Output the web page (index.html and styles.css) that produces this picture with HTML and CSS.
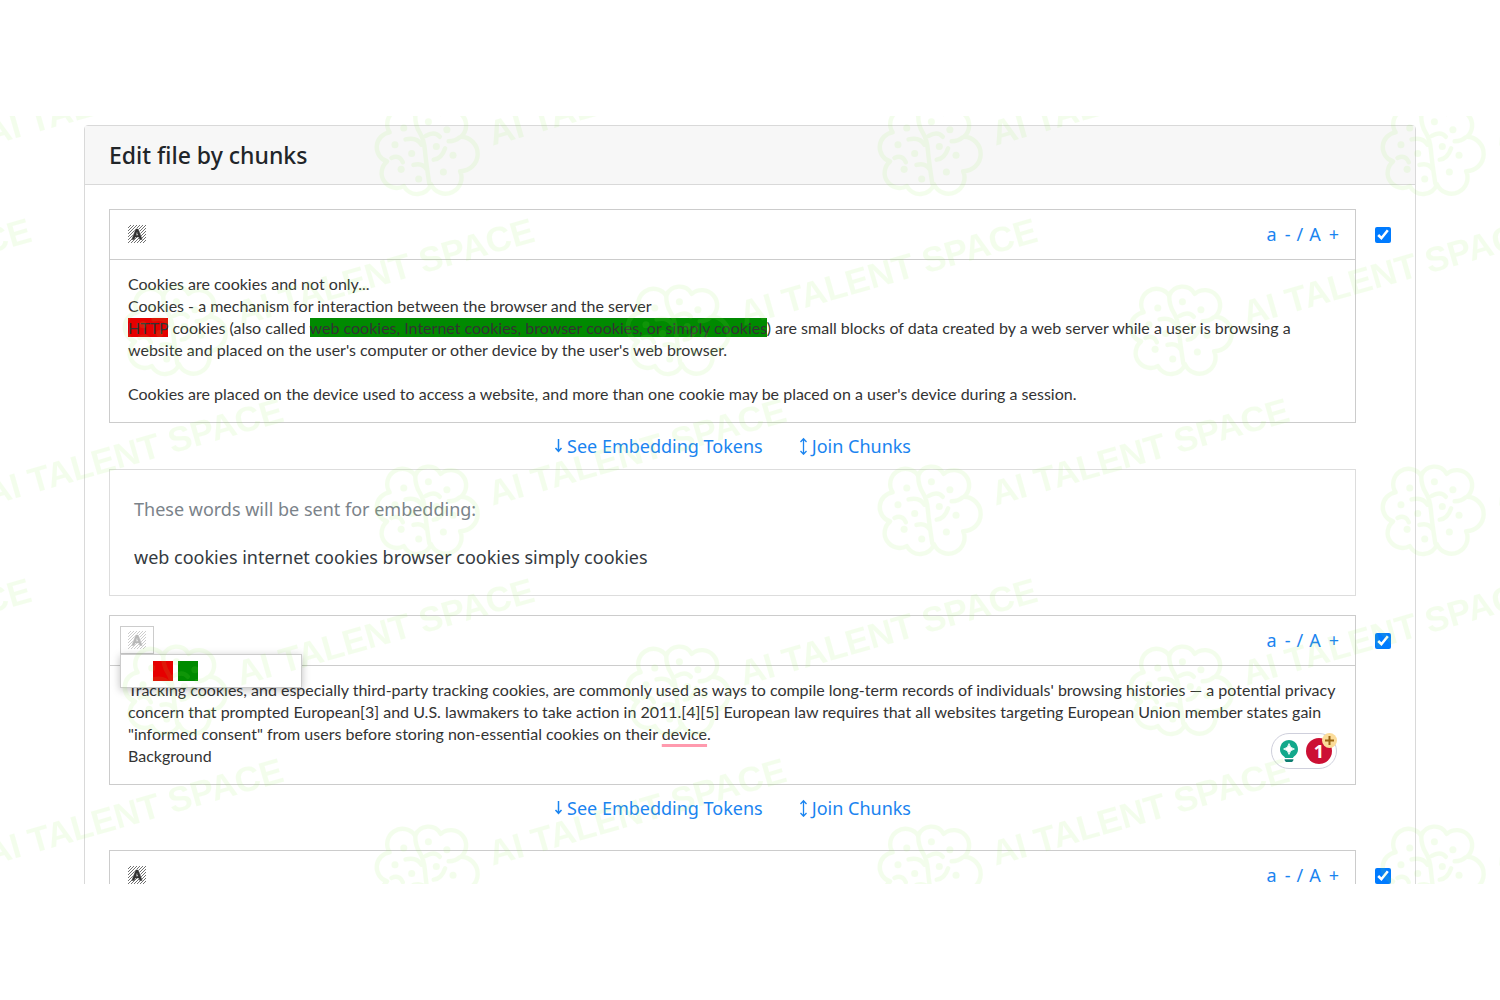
FILE: index.html
```html
<!DOCTYPE html>
<html lang="en">
<head>
    <meta charset="UTF-8">
    <meta name="viewport" content="width=device-width, initial-scale=1.0">
    <title>Edit file by chunks</title>
    <link rel="stylesheet" href="styles.css">
</head>
<body>
    <!-- Shared icons -->
    <svg class="sprite" aria-hidden="true">
        <defs>
            <pattern id="hatch" width="3" height="3" patternUnits="userSpaceOnUse">
                <path d="M-1 1L1 -1M-1 4L4 -1M2 4L4 2" stroke="#333" stroke-width="0.7"/>
            </pattern>
        </defs>
        <symbol id="icon-background" viewBox="0 0 18 18">
            <rect width="18" height="18" fill="url(#hatch)"/>
            <path d="M5 14L8.3 4.5H9.7L13 14M6.3 10.8H11.7" fill="none" stroke="#fff" stroke-width="2.6"/>
            <path d="M3.8 14.4L7.8 4H10.2L14.2 14.4H11.7L10.9 12H7.1L6.3 14.4ZM7.8 10.2H10.2L9 6.8Z" fill="#333" fill-rule="evenodd" stroke="#333" stroke-width="0.4"/>
        </symbol>
        <symbol id="icon-down" viewBox="0 0 9 18">
            <path d="M4.5 2V14M1.5 11L4.5 14.3L7.5 11" fill="none" stroke="currentColor" stroke-width="1.5"/>
        </symbol>
        <symbol id="icon-updown" viewBox="0 0 9 18">
            <path d="M4.5 2V17M1.5 5L4.5 1.8L7.5 5M1.5 14L4.5 17.2L7.5 14" fill="none" stroke="currentColor" stroke-width="1.3"/>
        </symbol>
    </svg>

    <main class="screen">
        <section class="card">
            <header class="card-header">
                <h1>Edit file by chunks</h1>
            </header>
            <div class="card-body">

                <div class="row">
                    <div class="chunk">
                        <div class="toolbar">
                            <button class="picker" type="button" aria-label="Background color">
                                <svg><use href="#icon-background"/></svg>
                            </button>
                            <div class="case">
                                <button type="button"><span>a</span> <span>-</span></button>
                                <span>/</span>
                                <button type="button"><span>A</span> <span>+</span></button>
                            </div>
                        </div>
                        <div class="editor" contenteditable="true" spellcheck="false">
                            <p>Cookies are cookies and not only...</p>
                            <p>Cookies - a mechanism for interaction between the browser and the server</p>
                            <p><span class="bg-red">HTTP</span> cookies (also called <span class="bg-green">web cookies, Internet cookies, browser cookies, or simply cookies</span>) are small blocks of data created by a web server while a user is browsing a website and placed on the user's computer or other device by the user's web browser.</p>
                            <p><br></p>
                            <p>Cookies are placed on the device used to access a website, and more than one cookie may be placed on a user's device during a session.</p>
                        </div>
                    </div>
                    <input type="checkbox" checked aria-label="Use chunk 1">
                    <div class="actions">
                        <a href="#tokens-1"><svg><use href="#icon-down"/></svg>See Embedding Tokens</a>
                        <a href="#join-1"><svg><use href="#icon-updown"/></svg>Join Chunks</a>
                    </div>
                    <div class="tokens" id="tokens-1">
                        <p class="muted">These words will be sent for embedding:</p>
                        <p>web cookies internet cookies browser cookies simply cookies</p>
                    </div>
                </div>

                <div class="row">
                    <div class="chunk">
                        <div class="toolbar">
                            <button class="picker open" type="button" aria-label="Background color" aria-expanded="true">
                                <svg><use href="#icon-background"/></svg>
                            </button>
                            <div class="palette">
                                <button class="swatch bg-red" type="button" aria-label="Red"></button>
                                <button class="swatch bg-green" type="button" aria-label="Green"></button>
                            </div>
                            <div class="case">
                                <button type="button"><span>a</span> <span>-</span></button>
                                <span>/</span>
                                <button type="button"><span>A</span> <span>+</span></button>
                            </div>
                        </div>
                        <div class="editor" contenteditable="true" spellcheck="false">
                            <p>Tracking cookies, and especially third-party tracking cookies, are commonly used as ways to compile long-term records of individuals' browsing histories — a potential privacy concern that prompted European[3] and U.S. lawmakers to take action in 2011.[4][5] European law requires that all websites targeting European Union member states gain "informed consent" from users before storing non-essential cookies on their <span class="typo">device</span>.</p>
                            <p>Background</p>
                        </div>
                        <div class="checker">
                            <svg class="bulb" viewBox="0 0 18 22">
                                <path d="M9 0A9 9 0 0 1 14 16.4Q13 17 13 18H5Q5 17 4 16.4A9 9 0 0 1 9 0Z" fill="#12a88b"/>
                                <path d="M9 3.6Q9.8 8.2 14.4 9Q9.8 9.8 9 14.4Q8.2 9.8 3.6 9Q8.2 8.2 9 3.6Z" fill="#fff" stroke="#fff" stroke-width="0.8"/>
                                <path d="M4.5 19.2H13.5Q13.3 22 11 22H7Q4.7 22 4.5 19.2Z" fill="#0d7d70"/>
                            </svg>
                            <span class="count">1</span>
                            <svg class="plus" viewBox="0 0 15 15">
                                <circle cx="7.5" cy="7.5" r="7.5" fill="#fbdc9a"/>
                                <path d="M7.5 3V12M3 7.5H12" stroke="#9a6412" stroke-width="2"/>
                            </svg>
                        </div>
                    </div>
                    <input type="checkbox" checked aria-label="Use chunk 2">
                    <div class="actions">
                        <a href="#tokens-2"><svg><use href="#icon-down"/></svg>See Embedding Tokens</a>
                        <a href="#join-2"><svg><use href="#icon-updown"/></svg>Join Chunks</a>
                    </div>
                </div>

                <div class="row">
                    <div class="chunk">
                        <div class="toolbar">
                            <button class="picker" type="button" aria-label="Background color">
                                <svg><use href="#icon-background"/></svg>
                            </button>
                            <div class="case">
                                <button type="button"><span>a</span> <span>-</span></button>
                                <span>/</span>
                                <button type="button"><span>A</span> <span>+</span></button>
                            </div>
                        </div>
                        <div class="editor" contenteditable="true" spellcheck="false">
                            <p><br></p>
                        </div>
                    </div>
                    <input type="checkbox" checked aria-label="Use chunk 3">
                </div>

            </div>
        </section>

        <!-- Brand watermark, tiled over the whole screen -->
        <svg class="watermark" aria-hidden="true">
            <defs>
                <g id="mark">
                    <g transform="translate(-3 0) scale(0.88)">
                        <g fill="none" stroke="currentColor" stroke-width="5" stroke-linecap="round" stroke-linejoin="round">
                            <path d="M-39 -20A17 17 0 0 1 -10 -39A16 16 0 0 1 19 -41A17 17 0 0 1 42 -15A17 17 0 0 1 41 24A18 18 0 0 1 8 39A17 17 0 0 1 -23 41A17 17 0 0 1 -42 13A17 17 0 0 1 -39 -20Z"/>
                            <path d="M-10 -39Q-10 -28 -5 -20T1 0T6 38M-21 -12Q-8 -15 -3 -6M-37 9Q-28 5 -24 14M-12 17Q-2 14 3 22M2 -16Q12 -22 18 -15M11 11Q20 10 24 -2M28 -10Q36 -10 40 -14"/>
                        </g>
                        <g fill="currentColor">
                            <circle cx="-23" cy="-25" r="4"/>
                            <circle cx="5" cy="-32" r="4"/>
                            <circle cx="26" cy="-23" r="4"/>
                            <circle cx="-33" cy="-6" r="4"/>
                            <circle cx="-14" cy="4" r="4"/>
                            <circle cx="14" cy="-4" r="4"/>
                            <circle cx="33" cy="6" r="4"/>
                            <circle cx="-26" cy="22" r="4"/>
                            <circle cx="-6" cy="33" r="4"/>
                            <circle cx="22" cy="25" r="4"/>
                        </g>
                    </g>
                    <text x="64" y="14" transform="rotate(-16)">AI TALENT SPACE</text>
                </g>
                <pattern id="marks" x="367" y="-91" width="503" height="360" patternUnits="userSpaceOnUse">
                    <use href="#mark" x="60" y="125"/>
                    <use href="#mark" x="311" y="305"/>
                    <use href="#mark" x="-192" y="305"/>
                </pattern>
            </defs>
            <rect width="100%" height="100%" fill="url(#marks)"/>
        </svg>
    </main>
</body>
</html>
```
FILE: styles.css
```css
* {
    box-sizing: border-box;
}
body {
    margin: 0;
    height: 100vh;
    padding: 116px 0;
    background: #fff;
    color: #212529;
    font: 18px/30px "Noto Sans", "Open Sans", sans-serif;
}
p, h1 {
    margin: 0;
}
button {
    padding: 0;
    border: none;
    background: none;
    color: inherit;
    font: inherit;
    cursor: pointer;
}
a {
    color: #1a84f0;
    text-decoration: none;
}
.sprite {
    position: absolute;
    width: 0;
    height: 0;
}

/* screen and card */
.screen {
    position: relative;
    height: 100%;
    padding: 9px 84px 0;
    overflow: hidden;
}
.card {
    border: 1px solid #d9d9d9;
    border-radius: 4px;
}
.card-header {
    padding: 14px 24px;
    background: #f7f7f7;
    border-bottom: 1px solid #d9d9d9;
}
.card-header h1 {
    font-size: 23px;
    font-weight: 500;
    line-height: 30px;
}
.card-body {
    padding: 24px;
}

/* one chunk with its checkbox and links */
.row {
    display: grid;
    grid-template-columns: minmax(0, 1fr) 16px;
    column-gap: 19px;
    margin-bottom: 19px;
}
.row > input {
    width: 16px;
    height: 16px;
    margin: 18px 0 0;
    accent-color: #007bff;
}
.chunk {
    position: relative;
    border: 1px solid #ccc;
}
.toolbar {
    position: relative;
    display: flex;
    align-items: center;
    justify-content: space-between;
    padding: 10px 16px 11px 10px;
    border-bottom: 1px solid #ccc;
}
.picker {
    width: 34px;
    height: 28px;
    display: flex;
    align-items: center;
    justify-content: center;
    border: 1px solid transparent;
}
.picker svg {
    width: 18px;
    height: 18px;
}
.picker.open {
    border-color: #ccc;
}
.picker.open svg {
    opacity: 0.35;
}
.palette {
    position: absolute;
    z-index: 2;
    top: 38px;
    left: 10px;
    width: 182px;
    display: flex;
    gap: 5px;
    padding: 6px 32px;
    background: #fff;
    border: 1px solid #ccc;
    box-shadow: 0 2px 8px rgba(0, 0, 0, 0.25);
}
.swatch {
    width: 20px;
    height: 20px;
}
.case {
    display: flex;
    gap: 6px;
    color: #1a84f0;
    line-height: 28px;
}
.case button {
    display: flex;
    gap: 8px;
}
.editor {
    padding: 13px 16px 17px 18px;
    color: #333;
    font: 16px/22px Lato, "Liberation Sans", sans-serif;
    outline: none;
}
.bg-red {
    background: #e60000;
}
.bg-green {
    background: #008a00;
}
.typo {
    text-decoration: underline 3px #ff9aae;
    text-underline-offset: 4px;
    text-decoration-skip-ink: none;
}
.actions {
    display: flex;
    justify-content: center;
    gap: 36px;
    padding: 8px 0;
    grid-column: 1;
}
.actions a {
    display: flex;
    align-items: center;
    gap: 4px;
}
.actions svg {
    width: 9px;
    height: 18px;
}
.tokens {
    grid-column: 1;
    padding: 24px 24px 23px;
    border: 1px solid #ddd;
    color: #343a40;
}
.tokens .muted {
    margin-bottom: 18px;
    color: #7b838a;
}

/* writing checker badge */
.checker {
    position: absolute;
    right: 18px;
    bottom: 15px;
    width: 66px;
    height: 36px;
    display: flex;
    align-items: center;
    gap: 8px;
    padding-left: 8px;
    background: #fff;
    border: 1px solid #cfd0dc;
    border-radius: 18px;
}
.bulb {
    width: 18px;
    height: 22px;
}
.count {
    width: 26px;
    height: 26px;
    border-radius: 50%;
    background: #cc1034;
    color: #fff;
    font-weight: 700;
    line-height: 26px;
    text-align: center;
}
.plus {
    position: absolute;
    top: -1px;
    right: -1px;
    width: 15px;
    height: 15px;
}

.watermark {
    position: absolute;
    z-index: 3;
    inset: 0;
    width: 100%;
    height: 100%;
    color: #96f550;
    opacity: 0.1;
    pointer-events: none;
}
.watermark text {
    fill: currentColor;
    font: bold 35px "Liberation Sans Narrow", "Liberation Sans", sans-serif;
}
```
